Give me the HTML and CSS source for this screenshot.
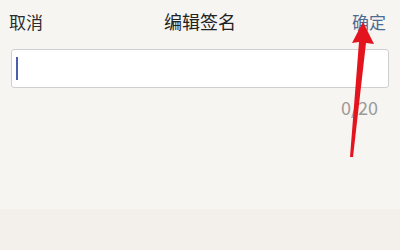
FILE: index.html
```html
<!DOCTYPE html>
<html>
<head>
<meta charset="utf-8">
<link rel="stylesheet" href="styles.css">
</head>
<body>
<div class="page">
  <div class="top">
    <header class="bar">
      <span class="cancel">取消</span>
      <span class="title">编辑签名</span>
      <span class="ok">确定</span>
    </header>
    <div class="field"><span class="caret"></span></div>
    <div class="count">0/20</div>
  </div>
  <div class="bottom"></div>
  <svg class="arrow" width="400" height="250" viewBox="0 0 400 250">
    <polygon points="363,22 352,43 359,42 350,157 353,157 366,43 374,44" fill="#e3141d"/>
  </svg>
</div>
</body>
</html>
```
FILE: styles.css
```css
html, body {
  margin: 0;
  padding: 0;
}
body {
  width: 400px;
  height: 250px;
  overflow: hidden;
  font-family: "Noto Sans CJK SC", "Noto Sans", sans-serif;
  background: #f3f0eb;
}
.page {
  position: relative;
  width: 400px;
  height: 250px;
  display: flex;
  flex-direction: column;
}
.top {
  background: #f7f5f1;
  height: 209px;
  display: flex;
  flex-direction: column;
}
.bottom {
  flex: 1;
  background: #f3f0eb;
}
.bar {
  height: 42px;
  display: flex;
  align-items: center;
  justify-content: space-between;
  padding: 0 14px 0 9px;
  position: relative;
}
.cancel {
  font-size: 17px;
  color: #2b2b2b;
}
.title {
  position: absolute;
  left: 0;
  right: 0;
  text-align: center;
  font-size: 18px;
  color: #222;
  pointer-events: none;
}
.ok {
  font-size: 17px;
  color: #4f6b95;
}
.field {
  margin: 7px 11px 0 11px;
  height: 37px;
  background: #fff;
  border: 1px solid #cfcfcf;
  border-radius: 3px;
  display: flex;
  align-items: center;
  padding-left: 4px;
}
.caret {
  width: 2px;
  height: 23px;
  background: #4a5fb0;
}
.count {
  align-self: flex-end;
  margin: 7px 22px 0 0;
  font-size: 18px;
  color: #9a9a9a;
  line-height: 24px;
}
.arrow {
  position: absolute;
  left: 0;
  top: 0;
}
```
